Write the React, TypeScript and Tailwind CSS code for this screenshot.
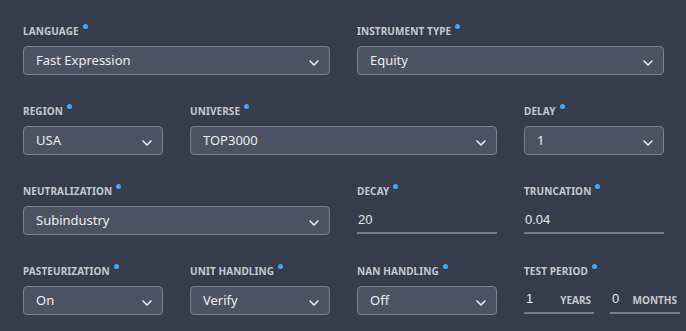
const noto = { fontFamily: '"Noto Sans", "Open Sans", sans-serif' };
const arial = { fontFamily: '"Liberation Sans", Arial, sans-serif' };

function Label({ text }: { text: string }) {
  return (
    <div className="flex h-[14px] items-start" style={noto}>
      <span className="text-[10px] font-bold uppercase leading-[14px] tracking-[0.01em] text-[#c5c9d1]">{text}</span>
      <span className="ml-[4px] mt-0 h-[5px] w-[5px] rounded-full bg-[#3fa9f5]" />
    </div>
  );
}

function Chevron() {
  return (
    <svg width="10" height="6" viewBox="0 0 10 6" fill="none" className="mt-[4px]">
      <path d="M1 1 L5 5 L9 1" stroke="#f2f3f5" strokeWidth="1.5" strokeLinecap="round" strokeLinejoin="round" />
    </svg>
  );
}

function Select({ label, value, span }: { label: string; value: string; span?: string }) {
  return (
    <div className={span}>
      <Label text={label} />
      <div
        className="mt-2 flex h-[29px] items-center justify-between rounded-[4px] border border-[#7b818d] bg-[#4b5263] pl-[12px] pr-[10px]"
        style={noto}
      >
        <span className="text-[13px] leading-[27px] text-[#eceef1]">{value}</span>
        <Chevron />
      </div>
    </div>
  );
}

function TextField({ label, value }: { label: string; value: string }) {
  return (
    <div>
      <Label text={label} />
      <div className="mt-2 h-[28px] border-b-2 border-[#797e88] pl-px text-[13px] leading-[28px] text-[#e8e9ec]" style={arial}>
        {value}
      </div>
    </div>
  );
}

function UnitField({ value, unit, width }: { value: string; unit: string; width: string }) {
  return (
    <div className={`flex h-[28px] items-center justify-between border-b-2 border-[#797e88] pl-[2px] pr-[3px] ${width}`}>
      <span className="text-[13px] leading-[28px] text-[#e8e9ec]" style={arial}>{value}</span>
      <span className="mt-[3px] text-[10px] font-bold uppercase text-[#c5c9d1]" style={noto}>{unit}</span>
    </div>
  );
}

export default function App() {
  return (
    <main className="h-[331px] w-[686px] overflow-hidden bg-[#353d4d] pl-[23px] pr-[22px] pt-6">
      <div className="grid grid-cols-4 gap-x-[27px] gap-y-[29px]">
        <Select label="Language" value="Fast Expression" span="col-span-2" />
        <Select label="Instrument Type" value="Equity" span="col-span-2" />

        <Select label="Region" value="USA" />
        <Select label="Universe" value="TOP3000" span="col-span-2" />
        <Select label="Delay" value="1" />

        <Select label="Neutralization" value="Subindustry" span="col-span-2" />
        <TextField label="Decay" value="20" />
        <TextField label="Truncation" value="0.04" />

        <Select label="Pasteurization" value="On" />
        <Select label="Unit Handling" value="Verify" />
        <Select label="NaN Handling" value="Off" />
        <div>
          <Label text="Test Period" />
          <div className="mt-2 flex w-[156px] gap-4">
            <UnitField value="1" unit="Years" width="w-[70px]" />
            <UnitField value="0" unit="Months" width="w-[70px]" />
          </div>
        </div>
      </div>
    </main>
  );
}
